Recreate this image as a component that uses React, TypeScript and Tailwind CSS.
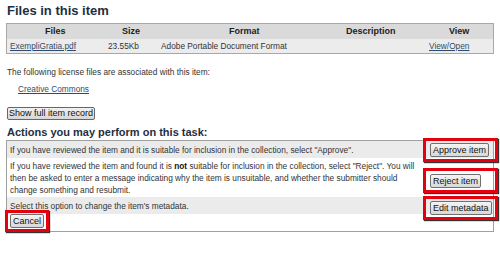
import React from 'react';

const Btn: React.FC<{ label: string; className?: string }> = ({ label, className = '' }) => (
    <button
        className={`h-[14px] px-[2px] text-[9px] leading-[12px] text-[#111] border border-[#707070] rounded-[2px] bg-gradient-to-b from-[#f4f4f4] to-[#d8d8d8] whitespace-nowrap ${className}`}
    >
        {label}
    </button>
);

const RedBox: React.FC<{ children: React.ReactNode; className?: string }> = ({ children, className = '' }) => (
    <div className={`border-[3px] border-[#e3000f] shadow-[1px_1px_1px_#333] flex items-center ${className}`}>
        {children}
    </div>
);

const App: React.FC = () => {
    return (
        <div
            className="w-[500px] h-[253px] bg-white overflow-hidden text-[#333]"
            style={{ fontFamily: '"Liberation Sans", Arial, sans-serif' }}
        >
            {/* Files section */}
            <h2 className="pl-[7px] pt-[3px] text-[13px] leading-[16px] font-bold text-[#1e2f3d]">Files in this item</h2>

            <div className="mx-[6px] mt-[4px] border border-[#a8a8a8] text-[8.3px]">
                <div className="grid grid-cols-[98px_53px_183px_85px_1fr] h-[15px] items-center bg-[#dadada] font-bold text-[9px] text-[#222]">
                    <span className="pl-[38px]">Files</span>
                    <span className="pl-[17px]">Size</span>
                    <span className="pl-[71px]">Format</span>
                    <span className="pl-[5px]">Description</span>
                    <span className="pl-[23px]">View</span>
                </div>
                <div className="grid grid-cols-[98px_53px_183px_85px_1fr] h-[14px] items-center bg-[#ececec]">
                    <span className="pl-[3px] underline text-[#2f4c6b]">ExempliGratia.pdf</span>
                    <span className="pl-[3px]">23.55Kb</span>
                    <span className="pl-[3px]">Adobe Portable Document Format</span>
                    <span></span>
                    <span className="pl-[3px] underline text-[#2f4c6b]">View/Open</span>
                </div>
            </div>

            <p className="pl-[7px] mt-[13px] text-[8.3px] leading-[10px]">The following license files are associated with this item:</p>
            <p className="pl-[18px] mt-[7px] text-[8.3px] leading-[10px] underline text-[#2f4c6b]">Creative Commons</p>

            <div className="pl-[7px] mt-[5px]">
                <button className="h-[13px] px-[1px] text-[9px] leading-[11px] text-[#111] border border-[#666] rounded-[2px] bg-gradient-to-b from-[#f2f2f2] to-[#d6d6d6]">
                    Show full item record
                </button>
            </div>

            {/* Actions section */}
            <h2 className="pl-[7px] mt-[2px] text-[11px] leading-[14px] font-bold text-[#1e2f3d]">Actions you may perform on this task:</h2>

            <div className="relative mx-[6px] mt-[1px] border border-[#a0a0a0] text-[8.3px] leading-[12px]">
                <div className="flex items-center h-[17px] bg-[#ebebeb]">
                    <p className="flex-1 pl-[3px]">If you have reviewed the item and it is suitable for inclusion in the collection, select "Approve".</p>
                </div>
                <div className="flex items-start h-[39px] bg-white pt-[2px]">
                    <p className="flex-1 pl-[3px]">
                        If you have reviewed the item and found it is <b className="text-[#111]">not</b> suitable for inclusion in the collection, select "Reject". You will
                        <br />
                        then be asked to enter a message indicating why the item is unsuitable, and whether the submitter should
                        <br />
                        change something and resubmit.
                    </p>
                </div>
                <div className="flex items-center h-[17px] bg-[#ebebeb]">
                    <p className="flex-1 pl-[3px]">Select this option to change the item's metadata.</p>
                </div>
                <div className="h-[17px] bg-white"></div>

                {/* highlighted buttons laid over the action rows */}
                <RedBox className="absolute left-[416px] top-[-3px] w-[75px] h-[24px] pl-[4px]">
                    <Btn label="Approve item" />
                </RedBox>
                <RedBox className="absolute left-[416px] top-[27px] w-[75px] h-[25px] pl-[4px]">
                    <Btn label="Reject item" />
                </RedBox>
                <RedBox className="absolute left-[416px] top-[55px] w-[75px] h-[24px] pl-[4px]">
                    <Btn label="Edit metadata" />
                </RedBox>
                <RedBox className="absolute left-[-2px] top-[69px] w-[44px] h-[22px] pl-[2px]">
                    <Btn label="Cancel" className="px-[1px]" />
                </RedBox>
            </div>
        </div>
    );
};

export default App;
